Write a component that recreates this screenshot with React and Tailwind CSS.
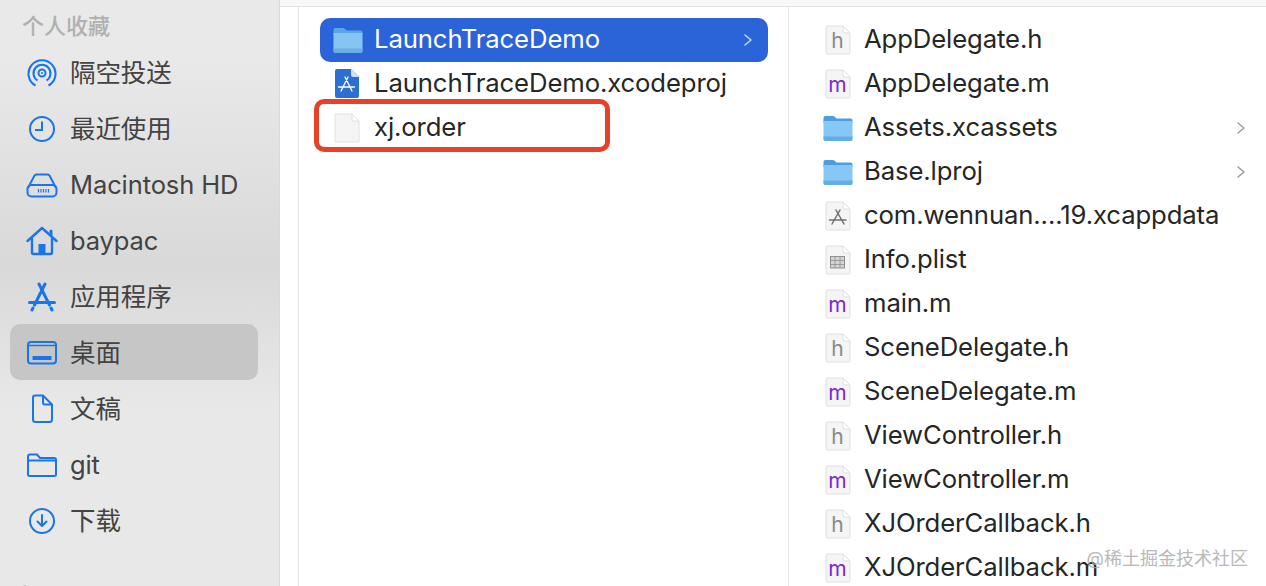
import React from 'react';

const CJK = { fontFamily: 'Inter, "Noto Sans CJK SC", sans-serif' };

// sidebar icons
const AirdropIcon = () => (
  <svg width="30" height="30" viewBox="0 0 30 30" fill="none" stroke="#1a75e8" strokeWidth="2">
    <path d="M8.500 27.500 A13.500 13.500 0 1 1 21.500 27.500" />
    <path d="M10.500 22.500 A8.500 8.500 0 1 1 19.500 22.500" />
    <circle cx="15" cy="15" r="3.500" />
    <circle cx="15" cy="15" r="1" fill="#1a75e8" stroke="none" />
  </svg>
);
const ClockIcon = () => (
  <svg width="30" height="30" viewBox="0 0 30 30" fill="none" stroke="#1a75e8" strokeWidth="2">
    <circle cx="15" cy="15" r="12" />
    <path d="M15 7.500V16H8" />
  </svg>
);
const DiskIcon = () => (
  <svg width="32" height="30" viewBox="0 0 32 30" fill="none" stroke="#1a75e8" strokeWidth="2">
    <path d="M2 18 L8.500 5.500 Q9.200 4.500 11 4.500 H21 Q22.800 4.500 23.500 5.500 L30 18" />
    <rect x="1.500" y="15" width="29" height="11.500" rx="4" />
    <path d="M12.500 19v3.500M15 19v3.500M17.500 19v3.500M20 19v3.500M22.500 19v3.500" strokeWidth="1.200" />
  </svg>
);
const HomeIcon = () => (
  <svg width="32" height="30" viewBox="0 0 32 30" fill="none" stroke="#1a75e8" strokeWidth="2.400" strokeLinecap="round" strokeLinejoin="round">
    <path d="M1.500 15 L16 2 L30.500 15" />
    <path d="M25 5V9" strokeWidth="3" />
    <path d="M6 13V26.500Q6 28 7.500 28H24.500Q26 28 26 26.500V13" />
    <rect x="12.500" y="18" width="7" height="10" fill="#1a75e8" stroke="none" />
  </svg>
);
const AppsIcon = () => (
  <svg width="30" height="30" viewBox="0 0 30 30" fill="none" stroke="#1a75e8" strokeWidth="3" strokeLinecap="round">
    <path d="M12 2 L22.500 23" />
    <path d="M18 2 L7.500 23" />
    <path d="M2.500 20.500 H27.500" />
    <path d="M6 26 L5 28M24 26 L25 28" />
  </svg>
);
const DesktopIcon = () => (
  <svg width="32" height="30" viewBox="0 0 32 30" fill="none" stroke="#1a75e8" strokeWidth="2">
    <rect x="2" y="4" width="28" height="21.500" rx="3" />
    <path d="M2 7.500H30" strokeWidth="1.500" />
    <rect x="6.500" y="18" width="19" height="4" rx="0.500" fill="#1a75e8" stroke="none" />
  </svg>
);
const DocIcon = () => (
  <svg width="30" height="30" viewBox="0 0 30 30" fill="none" stroke="#1a75e8" strokeWidth="2" strokeLinejoin="round">
    <path d="M6 3.500 Q6 1.500 8 1.500 H16 L25 10.500 V25.500 Q25 28 22.500 28 H8.500 Q6 28 6 25.500 Z" />
    <path d="M16 1.500 V8.500 Q16 10.500 18 10.500 H25" />
  </svg>
);
const FolderIcon = () => (
  <svg width="32" height="30" viewBox="0 0 32 30" fill="none" stroke="#1a75e8" strokeWidth="2" strokeLinejoin="round">
    <path d="M2 6.500 Q2 4.500 4 4.500 H11 L14 8 H28 Q30 8 30 10 V24.500 Q30 26 28 26 H4 Q2 26 2 24.500 Z" />
    <path d="M2 10.500 H30" />
  </svg>
);
const DownloadIcon = () => (
  <svg width="30" height="30" viewBox="0 0 30 30" fill="none" stroke="#1a75e8" strokeWidth="2" strokeLinecap="round" strokeLinejoin="round">
    <circle cx="15" cy="15" r="12" />
    <path d="M15 9V20M10.500 15.500 L15 20 L19.500 15.500" />
  </svg>
);

// finder file icons
const BlueFolder = ({ dark }) => (
  <svg width="30" height="26" viewBox="0 0 30 26">
    <path d="M0.500 3 Q0.500 1 2.500 1 H10 Q11.500 1 12.500 2.500 L13.500 3.500 H27.500 Q29.500 3.500 29.500 5.500 V8 H0.500 Z" fill={dark ? '#5ba6e6' : '#4a9fe0'} />
    <path d="M0.500 6 H29.500 V24 Q29.500 26 27.500 26 H2.500 Q0.500 26 0.500 24 Z" fill={dark ? '#86c5f3' : '#85c8f6'} />
    <path d="M0.500 21.500 H29.500 V24 Q29.500 26 27.500 26 H2.500 Q0.500 26 0.500 24 Z" fill={dark ? '#6baee6' : '#64aee8'} />
  </svg>
);

const DocShape = ({ children }) => (
  <svg width="28" height="30" viewBox="0 0 28 30">
    <path d="M2 2 Q2 1 3 1 H19 L26 8 V28 Q26 29 25 29 H3 Q2 29 2 28 Z" fill="#f5f5f5" stroke="#e0e0e0" strokeWidth="1" />
    <path d="M19 1 V7 Q19 8 20 8 H26 Z" fill="#ffffff" stroke="#e0e0e0" strokeWidth="1" />
    {children}
  </svg>
);

const LetterDoc = ({ letter, color }) => (
  <DocShape>
    <text x="13.500" y="23" textAnchor="middle" fontSize="21" fontFamily="Inter, sans-serif" fontWeight="400" fill={color}>{letter}</text>
  </DocShape>
);

const AppGlyph = ({ color }) => (
  <g fill="none" stroke={color} strokeWidth="1.500" strokeLinecap="round">
    <path d="M12 9 L20 23M16 9 L8 23M5.500 19 H22" />
  </g>
);

const PlistDoc = () => (
  <DocShape>
    <g fill="#d4d4d4" stroke="#8f8f8f" strokeWidth="1">
      <rect x="6.500" y="11.500" width="14" height="11.500" />
    </g>
    <path d="M6.500 15.500H20.500M6.500 19.500H20.500M11 11.500V23M16 11.500V23" stroke="#8f8f8f" strokeWidth="0.800" />
  </DocShape>
);

const XcodeDoc = () => (
  <svg width="28" height="32" viewBox="0 0 28 32">
    <path d="M2 3 Q2 1 4 1 H18 L26 9 V28 Q26 30 24 30 H4 Q2 30 2 28 Z" fill="#2b6fd0" />
    <path d="M18 1 V7 Q18 9 20 9 H26 Z" fill="#cfe2f8" />
    <g fill="none" stroke="#ffffff" strokeWidth="1.300" strokeLinecap="round">
      <path d="M12 9 L19 23M15 9 L8 23M5.500 19 H21.500" />
    </g>
  </svg>
);

const Chevron = ({ color }) => (
  <svg width="10" height="14" viewBox="0 0 10 14" fill="none" stroke={color} strokeWidth="1.500" strokeLinecap="round" strokeLinejoin="round">
    <path d="M2 2 L8 7 L2 12" />
  </svg>
);

const favorites = [
  { label: '隔空投送', icon: <AirdropIcon /> },
  { label: '最近使用', icon: <ClockIcon /> },
  { label: 'Macintosh HD', icon: <DiskIcon /> },
  { label: 'baypac', icon: <HomeIcon /> },
  { label: '应用程序', icon: <AppsIcon /> },
  { label: '桌面', icon: <DesktopIcon />, active: true },
  { label: '文稿', icon: <DocIcon /> },
  { label: 'git', icon: <FolderIcon /> },
  { label: '下载', icon: <DownloadIcon /> },
];

const hDoc = <LetterDoc letter="h" color="#8a8a8a" />;
const mDoc = <LetterDoc letter="m" color="#7a2bd0" />;

const projectFiles = [
  { name: 'AppDelegate.h', icon: hDoc },
  { name: 'AppDelegate.m', icon: mDoc },
  { name: 'Assets.xcassets', icon: <BlueFolder />, folder: true },
  { name: 'Base.lproj', icon: <BlueFolder />, folder: true },
  { name: 'com.wennuan....19.xcappdata', icon: <DocShape><AppGlyph color="#6f6f6f" /></DocShape> },
  { name: 'Info.plist', icon: <PlistDoc /> },
  { name: 'main.m', icon: mDoc },
  { name: 'SceneDelegate.h', icon: hDoc },
  { name: 'SceneDelegate.m', icon: mDoc },
  { name: 'ViewController.h', icon: hDoc },
  { name: 'ViewController.m', icon: mDoc },
  { name: 'XJOrderCallback.h', icon: hDoc },
  { name: 'XJOrderCallback.m', icon: mDoc },
];

const SidebarRow = ({ item }) => (
  <div className={`flex items-center h-[56px] mx-[10px] w-[248px] pl-[16px] rounded-[10px] ${item.active ? 'bg-[#c6c6c6]' : ''}`}>
    <span className="w-[32px] flex justify-center shrink-0 pt-[2px]">{item.icon}</span>
    <span className="ml-[12px] pt-[2px] text-[25.500px] tracking-[-0.1px] leading-none text-[#434343] whitespace-nowrap">{item.label}</span>
  </div>
);

const FileRow = ({ icon, name, folder }) => (
  <div className="flex items-center h-[44px] pl-[33px] pr-[20px]">
    <span className="w-[32px] flex justify-center shrink-0">{icon}</span>
    <span className="ml-[10px] pb-[2px] flex-1 text-[25.700px] tracking-[-0.12px] leading-none text-[#262626] whitespace-nowrap">{name}</span>
    {folder && <Chevron color="#9a9a9a" />}
  </div>
);

export default function App() {
  return (
    <div className="relative flex w-[1266px] h-[586px] overflow-hidden bg-white" style={CJK}>
      {/* sidebar */}
      <aside className="w-[280px] h-full shrink-0 border-r border-[#d9d9d9] bg-linear-to-b from-[#e9e9e9] from-10% via-[#d9d9d9] via-45% to-[#e8e8e8] to-70%">
        <div className="h-[44px] pt-[14px] pl-[22px] text-[22px] leading-[25px] font-medium text-[#b0b0b0]">个人收藏</div>
        {favorites.map((item) => (
          <SidebarRow key={item.label} item={item} />
        ))}
        <div className="mt-[34px] pl-[22px] text-[22px] leading-[25px] font-medium text-[#b0b0b0]">iCloud</div>
      </aside>

      <div className="flex-1 flex flex-col min-w-0">
        <div className="h-[7px] shrink-0 bg-[#f8f8f8] border-b border-[#e3e3e3]" />
        <div className="flex flex-1 min-h-0">
          <div className="w-[19px] shrink-0 border-r border-[#e3e3e3]" />

          {/* project column */}
          <div className="relative w-[490px] shrink-0 border-r border-[#e3e3e3] pt-[11px] pl-[21px] pr-[20px]">
            <div className="flex items-center h-[44px] pl-[13px] pr-[15px] rounded-[10px] bg-[#2b63d9]">
              <BlueFolder dark />
              <span className="ml-[11px] pb-[2px] flex-1 text-[25.700px] tracking-[-0.12px] leading-none text-white">LaunchTraceDemo</span>
              <Chevron color="#c6d8f7" />
            </div>
            <div className="flex items-center h-[44px] pl-[12px]">
              <span className="w-[30px] flex justify-center"><XcodeDoc /></span>
              <span className="ml-[12px] pb-[2px] text-[25.700px] tracking-[-0.12px] leading-none text-[#262626]">LaunchTraceDemo.xcodeproj</span>
            </div>
            <div className="flex items-center h-[44px] pl-[12px]">
              <span className="w-[30px] flex justify-center"><DocShape /></span>
              <span className="ml-[12px] pb-[2px] text-[25.700px] tracking-[-0.12px] leading-none text-[#262626]">xj.order</span>
            </div>
            {/* red annotation */}
            <div className="absolute left-[15px] top-[92px] w-[296px] h-[53px] rounded-[10px] border-[5px] border-[#e8412a]" />
          </div>

          {/* files column */}
          <div className="flex-1 min-w-0 pt-[11px]">
            {projectFiles.map((f) => (
              <FileRow key={f.name} {...f} />
            ))}
          </div>
        </div>
      </div>

      {/* watermark */}
      <div className="absolute right-[18px] bottom-[18px] text-[18px] leading-none text-[#a8a8a8] opacity-80 whitespace-nowrap">@稀土掘金技术社区</div>
    </div>
  );
}
